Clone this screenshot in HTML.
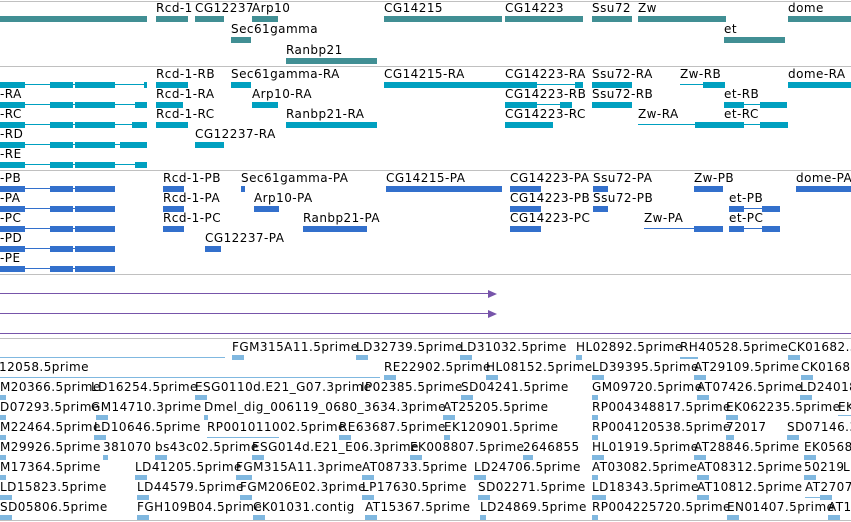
<!DOCTYPE html>
<html><head><meta charset="utf-8"><style>
*{margin:0;padding:0}
body{width:851px;height:522px;overflow:hidden;background:#fff;position:relative;font-family:"DejaVu Sans","Liberation Sans",sans-serif;font-size:12px;color:#000}
div{position:absolute}
.t{line-height:14px;white-space:nowrap;letter-spacing:0.45px}
.s{height:1px;background:#c0c0c0;left:0;width:851px}
.a{background:#418f94;height:6px}
.b{background:#00a0c0;height:6px}
.bl{background:#00a0c0;height:1px}
.c{background:#3370cc;height:6px}
.cl{background:#3370cc;height:1px}
.e{background:#80b8e0;height:5px;width:12px}
.el{background:#80b8e0;height:1px}
.p{background:#7755aa;height:1px}
</style></head><body>
<div class="s" style="top:1px"></div>
<!-- track 1 -->
<div class="t" style="left:156px;top:1px">Rcd-1</div>
<div class="t" style="left:195px;top:1px">CG12237</div>
<div class="t" style="left:252px;top:1px">Arp10</div>
<div class="t" style="left:384px;top:1px">CG14215</div>
<div class="t" style="left:505px;top:1px">CG14223</div>
<div class="t" style="left:592px;top:1px">Ssu72</div>
<div class="t" style="left:638px;top:1px">Zw</div>
<div class="t" style="left:788px;top:1px">dome</div>
<div class="a" style="left:0;width:147px;top:16px"></div>
<div class="a" style="left:156px;width:32px;top:16px"></div>
<div class="a" style="left:195px;width:29px;top:16px"></div>
<div class="a" style="left:252px;width:26px;top:16px"></div>
<div class="a" style="left:384px;width:118px;top:16px"></div>
<div class="a" style="left:505px;width:78px;top:16px"></div>
<div class="a" style="left:592px;width:40px;top:16px"></div>
<div class="a" style="left:638px;width:88px;top:16px"></div>
<div class="a" style="left:788px;width:63px;top:16px"></div>
<div class="t" style="left:231px;top:22px">Sec61gamma</div>
<div class="t" style="left:724px;top:22px">et</div>
<div class="a" style="left:231px;width:20px;top:37px"></div>
<div class="a" style="left:724px;width:61px;top:37px"></div>
<div class="t" style="left:286px;top:43px">Ranbp21</div>
<div class="a" style="left:286px;width:91px;top:58px"></div>
<div class="s" style="top:66px"></div>
<!-- track 2 -->
<div class="t" style="left:156px;top:67px">Rcd-1-RB</div>
<div class="t" style="left:231px;top:67px">Sec61gamma-RA</div>
<div class="t" style="left:384px;top:67px">CG14215-RA</div>
<div class="t" style="left:505px;top:67px">CG14223-RA</div>
<div class="t" style="left:592px;top:67px">Ssu72-RA</div>
<div class="t" style="left:680px;top:67px">Zw-RB</div>
<div class="t" style="left:788px;top:67px">dome-RA</div>
<div class="t" style="left:0;top:87px">-RA</div>
<div class="t" style="left:156px;top:87px">Rcd-1-RA</div>
<div class="t" style="left:252px;top:87px">Arp10-RA</div>
<div class="t" style="left:505px;top:87px">CG14223-RB</div>
<div class="t" style="left:592px;top:87px">Ssu72-RB</div>
<div class="t" style="left:724px;top:87px">et-RB</div>
<div class="t" style="left:0;top:107px">-RC</div>
<div class="t" style="left:156px;top:107px">Rcd-1-RC</div>
<div class="t" style="left:286px;top:107px">Ranbp21-RA</div>
<div class="t" style="left:505px;top:107px">CG14223-RC</div>
<div class="t" style="left:638px;top:107px">Zw-RA</div>
<div class="t" style="left:724px;top:107px">et-RC</div>
<div class="t" style="left:0;top:127px">-RD</div>
<div class="t" style="left:195px;top:127px">CG12237-RA</div>
<div class="t" style="left:0;top:147px">-RE</div>
<!-- row glyphs track2 -->
<div class="bl" style="left:0;width:147px;top:84px"></div><div class="b" style="left:0;width:25px;top:82px"></div><div class="b" style="left:50px;width:23px;top:82px"></div><div class="b" style="left:75px;width:40px;top:82px"></div><div class="b" style="left:144px;width:3px;top:82px"></div>
<div class="b" style="left:156px;width:32px;top:82px"></div><div class="b" style="left:231px;width:20px;top:82px"></div><div class="b" style="left:384px;width:121px;top:82px"></div><div class="b" style="left:505px;width:32px;top:82px"></div><div class="bl" style="left:537px;width:46px;top:84px"></div><div class="b" style="left:575px;width:8px;top:82px"></div><div class="b" style="left:592px;width:40px;top:82px"></div><div class="bl" style="left:680px;width:45px;top:84px"></div><div class="b" style="left:703px;width:22px;top:82px"></div><div class="b" style="left:788px;width:63px;top:82px"></div>
<div class="bl" style="left:0;width:147px;top:104px"></div><div class="b" style="left:0;width:25px;top:102px"></div><div class="b" style="left:50px;width:23px;top:102px"></div><div class="b" style="left:75px;width:40px;top:102px"></div><div class="b" style="left:135px;width:12px;top:102px"></div>
<div class="b" style="left:156px;width:27px;top:102px"></div><div class="b" style="left:252px;width:26px;top:102px"></div><div class="b" style="left:505px;width:32px;top:102px"></div><div class="bl" style="left:537px;width:35px;top:104px"></div><div class="b" style="left:560px;width:12px;top:102px"></div><div class="b" style="left:592px;width:40px;top:102px"></div><div class="b" style="left:724px;width:20px;top:102px"></div><div class="bl" style="left:744px;width:43px;top:104px"></div><div class="b" style="left:760px;width:27px;top:102px"></div>
<div class="bl" style="left:0;width:147px;top:124px"></div><div class="b" style="left:0;width:25px;top:122px"></div><div class="b" style="left:50px;width:23px;top:122px"></div><div class="b" style="left:75px;width:40px;top:122px"></div><div class="b" style="left:132px;width:15px;top:122px"></div>
<div class="b" style="left:156px;width:32px;top:122px"></div><div class="b" style="left:286px;width:91px;top:122px"></div><div class="b" style="left:505px;width:48px;top:122px"></div><div class="bl" style="left:638px;width:88px;top:124px"></div><div class="b" style="left:695px;width:31px;top:122px"></div><div class="b" style="left:724px;width:20px;top:122px"></div><div class="bl" style="left:744px;width:44px;top:124px"></div><div class="b" style="left:760px;width:28px;top:122px"></div>
<div class="bl" style="left:0;width:147px;top:144px"></div><div class="b" style="left:0;width:25px;top:142px"></div><div class="b" style="left:50px;width:23px;top:142px"></div><div class="b" style="left:75px;width:40px;top:142px"></div><div class="b" style="left:120px;width:27px;top:142px"></div><div class="b" style="left:195px;width:29px;top:142px"></div>
<div class="bl" style="left:0;width:147px;top:164px"></div><div class="b" style="left:0;width:25px;top:162px"></div><div class="b" style="left:50px;width:23px;top:162px"></div><div class="b" style="left:75px;width:40px;top:162px"></div><div class="b" style="left:135px;width:12px;top:162px"></div>
<div class="s" style="top:170px"></div>
<!-- track 3 -->
<div class="t" style="left:0;top:171px">-PB</div>
<div class="t" style="left:163px;top:171px">Rcd-1-PB</div>
<div class="t" style="left:241px;top:171px">Sec61gamma-PA</div>
<div class="t" style="left:386px;top:171px">CG14215-PA</div>
<div class="t" style="left:510px;top:171px">CG14223-PA</div>
<div class="t" style="left:593px;top:171px">Ssu72-PA</div>
<div class="t" style="left:694px;top:171px">Zw-PB</div>
<div class="t" style="left:796px;top:171px">dome-PA</div>
<div class="t" style="left:0;top:191px">-PA</div>
<div class="t" style="left:163px;top:191px">Rcd-1-PA</div>
<div class="t" style="left:254px;top:191px">Arp10-PA</div>
<div class="t" style="left:510px;top:191px">CG14223-PB</div>
<div class="t" style="left:593px;top:191px">Ssu72-PB</div>
<div class="t" style="left:729px;top:191px">et-PB</div>
<div class="t" style="left:0;top:211px">-PC</div>
<div class="t" style="left:163px;top:211px">Rcd-1-PC</div>
<div class="t" style="left:303px;top:211px">Ranbp21-PA</div>
<div class="t" style="left:510px;top:211px">CG14223-PC</div>
<div class="t" style="left:644px;top:211px">Zw-PA</div>
<div class="t" style="left:729px;top:211px">et-PC</div>
<div class="t" style="left:0;top:231px">-PD</div>
<div class="t" style="left:205px;top:231px">CG12237-PA</div>
<div class="t" style="left:0;top:251px">-PE</div>
<div class="cl" style="left:0;width:115px;top:188px"></div><div class="c" style="left:0;width:25px;top:186px"></div><div class="c" style="left:50px;width:23px;top:186px"></div><div class="c" style="left:75px;width:40px;top:186px"></div>
<div class="c" style="left:163px;width:21px;top:186px"></div><div class="c" style="left:241px;width:4px;top:186px"></div><div class="c" style="left:386px;width:116px;top:186px"></div><div class="c" style="left:510px;width:31px;top:186px"></div><div class="c" style="left:593px;width:15px;top:186px"></div><div class="c" style="left:694px;width:29px;top:186px"></div><div class="c" style="left:796px;width:55px;top:186px"></div>
<div class="cl" style="left:0;width:115px;top:208px"></div><div class="c" style="left:0;width:25px;top:206px"></div><div class="c" style="left:50px;width:23px;top:206px"></div><div class="c" style="left:75px;width:40px;top:206px"></div>
<div class="c" style="left:163px;width:21px;top:206px"></div><div class="c" style="left:254px;width:25px;top:206px"></div><div class="c" style="left:510px;width:31px;top:206px"></div><div class="c" style="left:593px;width:15px;top:206px"></div><div class="c" style="left:729px;width:15px;top:206px"></div><div class="cl" style="left:744px;width:36px;top:208px"></div><div class="c" style="left:762px;width:18px;top:206px"></div>
<div class="cl" style="left:0;width:115px;top:228px"></div><div class="c" style="left:0;width:25px;top:226px"></div><div class="c" style="left:50px;width:23px;top:226px"></div><div class="c" style="left:75px;width:40px;top:226px"></div>
<div class="c" style="left:163px;width:21px;top:226px"></div><div class="c" style="left:303px;width:64px;top:226px"></div><div class="c" style="left:510px;width:31px;top:226px"></div><div class="cl" style="left:644px;width:79px;top:228px"></div><div class="c" style="left:694px;width:29px;top:226px"></div><div class="c" style="left:729px;width:15px;top:226px"></div><div class="cl" style="left:744px;width:36px;top:228px"></div><div class="c" style="left:762px;width:18px;top:226px"></div>
<div class="cl" style="left:0;width:115px;top:248px"></div><div class="c" style="left:0;width:25px;top:246px"></div><div class="c" style="left:50px;width:23px;top:246px"></div><div class="c" style="left:75px;width:40px;top:246px"></div><div class="c" style="left:205px;width:16px;top:246px"></div>
<div class="cl" style="left:0;width:115px;top:268px"></div><div class="c" style="left:0;width:25px;top:266px"></div><div class="c" style="left:50px;width:23px;top:266px"></div><div class="c" style="left:75px;width:40px;top:266px"></div>
<div class="s" style="top:274px"></div>
<!-- purple -->
<div class="p" style="left:0;width:490px;top:293px"></div>
<div style="left:488px;top:290px;width:0;height:0;border-left:9px solid #7755aa;border-top:4px solid transparent;border-bottom:4px solid transparent"></div>
<div class="p" style="left:0;width:490px;top:313px"></div>
<div style="left:488px;top:310px;width:0;height:0;border-left:9px solid #7755aa;border-top:4px solid transparent;border-bottom:4px solid transparent"></div>
<div class="p" style="left:0;width:851px;top:333px"></div>
<div class="s" style="top:338px"></div>
<!-- EST -->
<div class="el" style="left:0;width:225px;top:357px"></div>
<div class="el" style="left:0;width:380px;top:377px"></div>
<div class="t" style="left:232px;top:340px">FGM315A11.5prime</div><div class="t" style="left:356px;top:340px">LD32739.5prime</div><div class="t" style="left:460px;top:340px">LD31032.5prime</div><div class="t" style="left:576px;top:340px">HL02892.5prime</div><div class="t" style="left:680px;top:340px">RH40528.5prime</div><div class="t" style="left:788px;top:340px">CK01682.3</div>
<div class="e" style="left:232px;top:355px"></div><div class="e" style="left:356px;top:355px"></div><div class="e" style="left:460px;top:355px"></div><div class="e" style="left:576px;top:355px;width:6px"></div><div class="e" style="left:680px;top:355px;width:18px;height:2px;top:357px"></div><div class="e" style="left:788px;top:355px"></div>
<div class="t" style="left:-1px;top:360px">12058.5prime</div><div class="t" style="left:384px;top:360px">RE22902.5prime</div><div class="t" style="left:486px;top:360px">HL08152.5prime</div><div class="t" style="left:592px;top:360px">LD39395.5prime</div><div class="t" style="left:694px;top:360px">AT29109.5prime</div><div class="t" style="left:801px;top:360px">CK01682</div>
<div class="e" style="left:384px;top:375px"></div><div class="e" style="left:486px;top:375px"></div><div class="e" style="left:592px;top:375px"></div><div class="e" style="left:694px;top:375px"></div><div class="e" style="left:801px;top:375px"></div>
<div class="t" style="left:0;top:380px">M20366.5prime</div><div class="t" style="left:91px;top:380px">LD16254.5prime</div><div class="t" style="left:195px;top:380px">ESG0110d.E21_G07.3prime</div><div class="t" style="left:361px;top:380px">IP02385.5prime</div><div class="t" style="left:461px;top:380px">SD04241.5prime</div><div class="t" style="left:592px;top:380px">GM09720.5prime</div><div class="t" style="left:697px;top:380px">AT07426.5prime</div><div class="t" style="left:800px;top:380px">LD24018</div>
<div class="e" style="left:0;top:395px;width:6px"></div><div class="e" style="left:195px;top:395px"></div><div class="e" style="left:461px;top:395px"></div><div class="e" style="left:592px;top:395px;width:6px"></div><div class="e" style="left:697px;top:395px"></div><div class="e" style="left:800px;top:395px"></div>
<div class="t" style="left:0;top:400px">D07293.5prime</div><div class="t" style="left:91px;top:400px">GM14710.3prime</div><div class="t" style="left:204px;top:400px">Dmel_dig_006119_0680_3634.3prime</div><div class="t" style="left:443px;top:400px">AT25205.5prime</div><div class="t" style="left:592px;top:400px">RP004348817.5prime</div><div class="t" style="left:726px;top:400px">EK062235.5prime</div><div class="t" style="left:838px;top:400px">EK</div>
<div class="e" style="left:0;top:415px;width:6px"></div><div class="e" style="left:96px;top:415px"></div><div class="e" style="left:204px;top:415px;width:4px"></div><div class="e" style="left:443px;top:415px"></div><div class="e" style="left:592px;top:415px;width:6px"></div><div class="e" style="left:726px;top:415px"></div><div class="el" style="left:838px;top:415px;width:13px"></div>
<div class="t" style="left:0;top:420px">M22464.5prime</div><div class="t" style="left:94px;top:420px">LD10646.5prime</div><div class="t" style="left:207px;top:420px">RP001011002.5prime</div><div class="t" style="left:339px;top:420px">RE63687.5prime</div><div class="t" style="left:444px;top:420px">EK120901.5prime</div><div class="t" style="left:592px;top:420px">RP004120538.5prime</div><div class="t" style="left:726px;top:420px">72017</div><div class="t" style="left:787px;top:420px">SD07146.3</div>
<div class="e" style="left:0;top:435px;width:6px"></div><div class="e" style="left:94px;top:435px"></div><div class="el" style="left:207px;top:437px;width:72px"></div><div class="e" style="left:339px;top:435px"></div><div class="e" style="left:444px;top:435px;width:6px"></div><div class="e" style="left:592px;top:435px;width:6px"></div><div class="e" style="left:726px;top:435px;width:8px"></div><div class="e" style="left:787px;top:435px"></div>
<div class="t" style="left:0;top:440px">M29926.5prime</div><div class="t" style="left:103px;top:440px">381070</div><div class="t" style="left:155px;top:440px">bs43c02.5prime</div><div class="t" style="left:252px;top:440px">ESG014d.E21_E06.3prime</div><div class="t" style="left:410px;top:440px">EK008807.5prime</div><div class="t" style="left:523px;top:440px">2646855</div><div class="t" style="left:592px;top:440px">HL01919.5prime</div><div class="t" style="left:694px;top:440px">AT28846.5prime</div><div class="t" style="left:804px;top:440px">EK0568</div>
<div class="e" style="left:0;top:455px;width:6px"></div><div class="e" style="left:103px;top:455px;width:5px"></div><div class="e" style="left:155px;top:455px"></div><div class="e" style="left:252px;top:455px"></div><div class="e" style="left:410px;top:455px"></div><div class="e" style="left:523px;top:455px;width:10px"></div><div class="e" style="left:592px;top:455px"></div><div class="e" style="left:694px;top:455px"></div><div class="e" style="left:804px;top:455px"></div>
<div class="t" style="left:0;top:460px">M17364.5prime</div><div class="t" style="left:135px;top:460px">LD41205.5prime</div><div class="t" style="left:236px;top:460px">FGM315A11.3prime</div><div class="t" style="left:362px;top:460px">AT08733.5prime</div><div class="t" style="left:474px;top:460px">LD24706.5prime</div><div class="t" style="left:592px;top:460px">AT03082.5prime</div><div class="t" style="left:697px;top:460px">AT08312.5prime</div><div class="t" style="left:804px;top:460px">50219</div><div class="t" style="left:843px;top:460px">LD</div>
<div class="e" style="left:0;top:475px;width:6px"></div><div class="e" style="left:135px;top:475px"></div><div class="e" style="left:236px;top:475px;width:16px"></div><div class="e" style="left:362px;top:475px"></div><div class="e" style="left:474px;top:475px"></div><div class="e" style="left:592px;top:475px;width:6px"></div><div class="e" style="left:697px;top:475px"></div><div class="e" style="left:804px;top:475px"></div>
<div class="t" style="left:0;top:480px">LD15823.5prime</div><div class="t" style="left:137px;top:480px">LD44579.5prime</div><div class="t" style="left:240px;top:480px">FGM206E02.3prime</div><div class="t" style="left:362px;top:480px">LP17630.5prime</div><div class="t" style="left:478px;top:480px">SD02271.5prime</div><div class="t" style="left:592px;top:480px">LD18343.5prime</div><div class="t" style="left:697px;top:480px">AT10812.5prime</div><div class="t" style="left:805px;top:480px">AT2707</div>
<div class="e" style="left:0;top:495px"></div><div class="e" style="left:137px;top:495px"></div><div class="e" style="left:240px;top:495px"></div><div class="e" style="left:362px;top:495px"></div><div class="e" style="left:478px;top:495px"></div><div class="e" style="left:592px;top:495px;width:14px"></div><div class="e" style="left:697px;top:495px"></div><div class="el" style="left:805px;top:497px;width:25px"></div><div class="e" style="left:820px;top:495px"></div>
<div class="t" style="left:0;top:500px">SD05806.5prime</div><div class="t" style="left:137px;top:500px">FGH109B04.5prime</div><div class="t" style="left:253px;top:500px">CK01031.contig</div><div class="t" style="left:365px;top:500px">AT15367.5prime</div><div class="t" style="left:480px;top:500px">LD24869.5prime</div><div class="t" style="left:592px;top:500px">RP004225720.5prime</div><div class="t" style="left:727px;top:500px">EN01407.5prime</div><div class="t" style="left:828px;top:500px">AT1</div>
<div class="e" style="left:0;top:515px"></div><div class="e" style="left:137px;top:515px"></div><div class="e" style="left:253px;top:515px"></div><div class="e" style="left:365px;top:515px"></div><div class="e" style="left:480px;top:515px;width:6px"></div><div class="e" style="left:592px;top:515px;width:6px"></div><div class="e" style="left:727px;top:515px"></div><div class="e" style="left:828px;top:515px"></div>
<div class="s" style="top:520px"></div>
</body></html>
